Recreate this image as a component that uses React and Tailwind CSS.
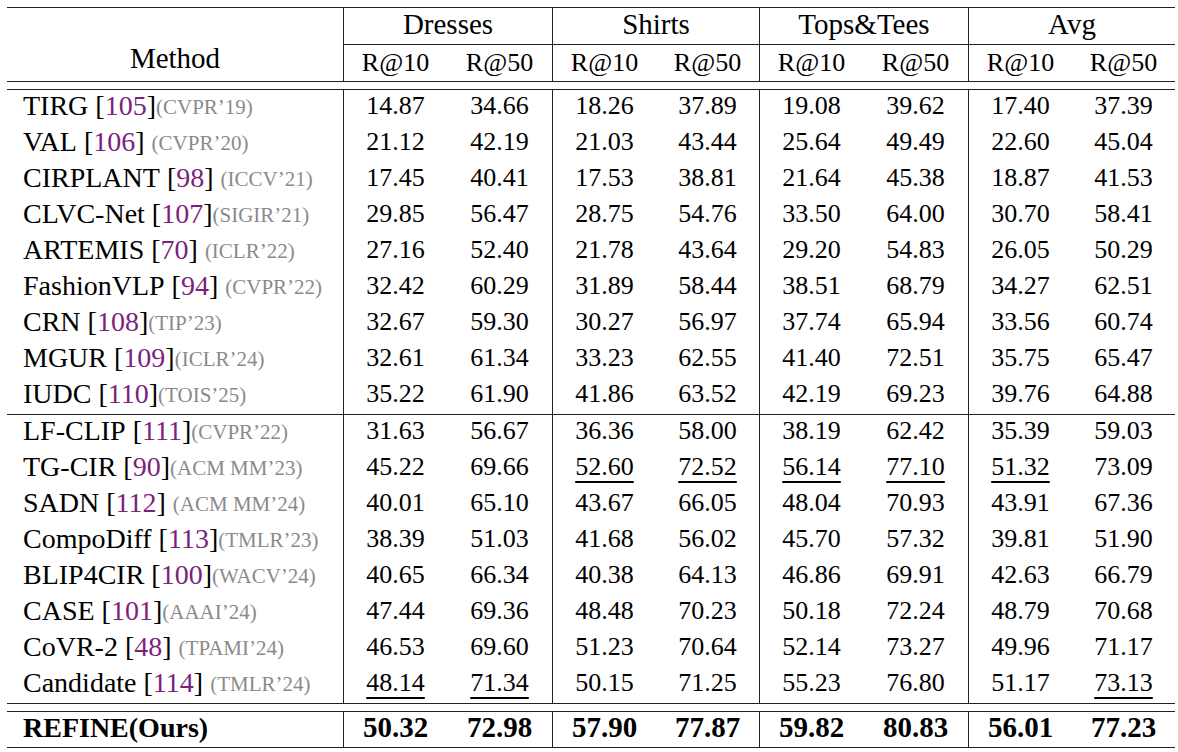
import React from "react";

const cols = "grid grid-cols-[336px_104px_105px_104px_103px_104px_105px_104px_103px]";

const body1 = [
  ["TIRG", "105", "(CVPR’19)", false, ["14.87", "34.66", "18.26", "37.89", "19.08", "39.62", "17.40", "37.39"]],
  ["VAL", "106", "(CVPR’20)", true, ["21.12", "42.19", "21.03", "43.44", "25.64", "49.49", "22.60", "45.04"]],
  ["CIRPLANT", "98", "(ICCV’21)", true, ["17.45", "40.41", "17.53", "38.81", "21.64", "45.38", "18.87", "41.53"]],
  ["CLVC-Net", "107", "(SIGIR’21)", false, ["29.85", "56.47", "28.75", "54.76", "33.50", "64.00", "30.70", "58.41"]],
  ["ARTEMIS", "70", "(ICLR’22)", true, ["27.16", "52.40", "21.78", "43.64", "29.20", "54.83", "26.05", "50.29"]],
  ["FashionVLP", "94", "(CVPR’22)", true, ["32.42", "60.29", "31.89", "58.44", "38.51", "68.79", "34.27", "62.51"]],
  ["CRN", "108", "(TIP’23)", false, ["32.67", "59.30", "30.27", "56.97", "37.74", "65.94", "33.56", "60.74"]],
  ["MGUR", "109", "(ICLR’24)", false, ["32.61", "61.34", "33.23", "62.55", "41.40", "72.51", "35.75", "65.47"]],
  ["IUDC", "110", "(TOIS’25)", false, ["35.22", "61.90", "41.86", "63.52", "42.19", "69.23", "39.76", "64.88"]],
];

const body2 = [
  ["LF-CLIP", "111", "(CVPR’22)", false, ["31.63", "56.67", "36.36", "58.00", "38.19", "62.42", "35.39", "59.03"]],
  ["TG-CIR", "90", "(ACM MM’23)", false, ["45.22", "69.66", "_52.60", "_72.52", "_56.14", "_77.10", "_51.32", "73.09"]],
  ["SADN", "112", "(ACM MM’24)", true, ["40.01", "65.10", "43.67", "66.05", "48.04", "70.93", "43.91", "67.36"]],
  ["CompoDiff", "113", "(TMLR’23)", false, ["38.39", "51.03", "41.68", "56.02", "45.70", "57.32", "39.81", "51.90"]],
  ["BLIP4CIR", "100", "(WACV’24)", false, ["40.65", "66.34", "40.38", "64.13", "46.86", "69.91", "42.63", "66.79"]],
  ["CASE", "101", "(AAAI’24)", false, ["47.44", "69.36", "48.48", "70.23", "50.18", "72.24", "48.79", "70.68"]],
  ["CoVR-2", "48", "(TPAMI’24)", true, ["46.53", "69.60", "51.23", "70.64", "52.14", "73.27", "49.96", "71.17"]],
  ["Candidate", "114", "(TMLR’24)", true, ["_48.14", "_71.34", "50.15", "71.25", "55.23", "76.80", "51.17", "_73.13"]],
];

function Num({ v, i, bold }) {
  const u = v.startsWith("_");
  const t = u ? v.slice(1) : v;
  const border = i % 2 === 0 ? "border-l border-[#222]" : "";
  return (
    <div
      className={`${border} flex items-center justify-center ${
        bold ? "font-bold text-[29px] pb-[4px]" : "pb-[5px]"
      }`}
    >
      {u ? (
        <span className="underline decoration-[1.5px] underline-offset-[6px]">{t}</span>
      ) : (
        t
      )}
    </div>
  );
}

function Row({ r, h = "h-[36px]" }) {
  const [name, cite, venue, sp, nums] = r;
  return (
    <div className={`${cols} ${h}`}>
      <div className="flex items-center pl-[16px] pb-[5px] whitespace-nowrap text-[28px]">
        <span>{name}&nbsp;[</span>
        <span className="text-[#7d1f7d]">{cite}</span>
        <span>]</span>
        {sp && <span>&nbsp;</span>}
        <span className="text-[21px] text-[#8a8a8a] pt-[3px]">{venue}</span>
      </div>
      {nums.map((v, i) => (
        <Num key={i} v={v} i={i} />
      ))}
    </div>
  );
}

export default function App() {
  return (
    <div
      className="w-[1178px] h-[752px] bg-white text-black pl-[7px] pt-[7px] text-[26px] leading-none"
      style={{ fontFamily: '"Liberation Serif", "DejaVu Serif", serif' }}
    >
      <div className="w-[1168px]">
        {/* header */}
        <div className={`${cols} grid-rows-[37px_36px] border-t-[1.5px] border-b border-[#222]`}>
          <div className="row-span-2 flex items-end justify-center pb-[8px] text-[29px]">Method</div>
          {["Dresses", "Shirts", "Tops&Tees", "Avg"].map((g) => (
            <div
              key={g}
              className="col-span-2 flex items-center justify-center border-l border-b border-[#222] pb-[3px] text-[29px]"
            >
              {g}
            </div>
          ))}
          {["R@10", "R@50", "R@10", "R@50", "R@10", "R@50", "R@10", "R@50"].map((t, i) => (
            <div
              key={i}
              className={`${i % 2 === 0 ? "border-l border-[#222]" : ""} flex items-center justify-center`}
            >
              {t}
            </div>
          ))}
        </div>
        <div className="h-[7px]" />
        <div className="border-t border-b border-[#222]">
          {body1.map((r) => (
            <Row key={r[0]} r={r} />
          ))}
        </div>
        <div className="border-b border-[#222]">
          {body2.map((r) => (
            <Row key={r[0]} r={r} />
          ))}
        </div>
        <div className="h-[7px]" />
        <div className={`${cols} h-[37px] border-t border-b-[1.5px] border-[#222] font-bold`}>
          <div className="flex items-center pl-[16px] pb-[4px] text-[28px]">REFINE(Ours)</div>
          {["50.32", "72.98", "57.90", "77.87", "59.82", "80.83", "56.01", "77.23"].map((v, i) => (
            <Num key={i} v={v} i={i} bold />
          ))}
        </div>
      </div>
    </div>
  );
}
